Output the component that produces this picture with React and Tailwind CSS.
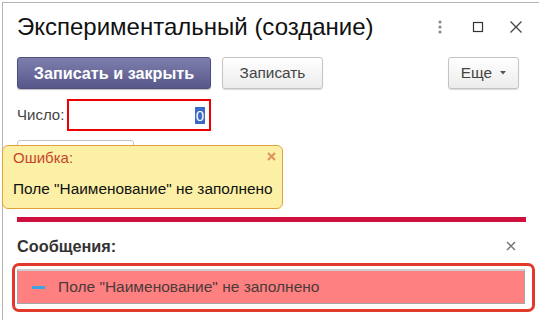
import React from "react";

export default function App() {
  return (
    <div className="relative w-[539px] h-[320px] overflow-hidden bg-white font-['Liberation_Sans',Arial,sans-serif] text-[#333]">
      <div className="ml-[2px] mt-[2px] h-[318px] border-t border-l border-[#b4b4b4] pl-[14px]">
        {/* Header */}
        <div className="flex items-center h-[28px] mt-[10px]">
          <div className="text-[24px] leading-[28px] text-[#111] whitespace-nowrap">
            Экспериментальный (создание)
          </div>
          <div className="ml-auto flex items-center">
            <svg width="6" height="14" viewBox="0 0 6 14" className="mr-[29px]">
              <circle cx="3" cy="2" r="1.6" fill="#8a8a8a" />
              <circle cx="3" cy="7" r="1.6" fill="#8a8a8a" />
              <circle cx="3" cy="12" r="1.6" fill="#8a8a8a" />
            </svg>
            <svg width="12" height="12" viewBox="0 0 12 12" className="mr-[25px]">
              <rect x="1.5" y="1.5" width="9" height="9" fill="none" stroke="#333" strokeWidth="1.2" />
            </svg>
            <svg width="14" height="14" viewBox="0 0 14 14" className="mr-[16px]">
              <path d="M1.5 1.5 L12.5 12.5 M12.5 1.5 L1.5 12.5" stroke="#444" strokeWidth="1.3" />
            </svg>
          </div>
        </div>

        {/* Buttons */}
        <div className="flex items-center mt-[16px] h-[32px]">
          <button className="h-[32px] w-[194px] rounded-[3px] border border-[#4f4f80] bg-gradient-to-b from-[#7f7fae] to-[#57578a] text-white font-bold text-[16.2px] shadow-[0_1px_1px_rgba(0,0,0,0.25)]">
            Записать и закрыть
          </button>
          <button className="ml-[11px] h-[32px] w-[101px] rounded-[3px] border border-[#c4c4c4] bg-gradient-to-b from-white to-[#ececec] text-[#444] text-[15.4px] shadow-[0_1px_1px_rgba(0,0,0,0.15)]">
            Записать
          </button>
          <button className="ml-auto mr-[20px] h-[32px] w-[71px] rounded-[3px] border border-[#c4c4c4] bg-gradient-to-b from-white to-[#ececec] text-[#444] text-[15.4px] flex items-center justify-center shadow-[0_1px_1px_rgba(0,0,0,0.15)]">
            <span>Еще</span>
            <svg width="6" height="4" viewBox="0 0 6 4" className="ml-[8px]">
              <path d="M0 0 L6 0 L3 3.5 Z" fill="#555" />
            </svg>
          </button>
        </div>

        {/* Field */}
        <div className="flex items-center mt-[10px] h-[32px]">
          <span className="text-[15px] text-[#444] w-[50px]">Число:</span>
          <div className="w-[144px] h-[32px] border-2 border-[#ee0000] flex items-center justify-end pr-[4px]">
            <span className="bg-[#3d6ac4] text-white text-[15px] leading-[17px] px-[1px]">0</span>
          </div>
        </div>

        {/* Partially hidden button */}
        <div className="mt-[9px] w-[117px] h-[28px] rounded-[3px] border border-[#c4c4c4] bg-white" />

        {/* Red line */}
        <div className="mt-[49px] w-[509px] h-[5px] bg-[#cf0f3d]" />

        {/* Messages header */}
        <div className="flex items-center mt-[15px] h-[18px] w-[509px]">
          <span className="font-bold text-[16.3px] text-[#333]">Сообщения:</span>
          <svg width="10" height="10" viewBox="0 0 10 10" className="ml-auto mr-[10px]">
            <path d="M1 1 L9 9 M9 1 L1 9" stroke="#777" strokeWidth="1.5" />
          </svg>
        </div>

        {/* Messages box */}
        <div className="mt-[8px] ml-[-5px] w-[523px] h-[49px] rounded-[7px] border-[3px] border-[#e2392d] pl-[2px] pt-[3px]">
          <div className="w-[508px] h-[35px] border border-[#a8a8a8] border-t-[2px] border-t-[#cfcfcf] bg-[#ff8080] flex items-center">
            <div className="ml-[14px] w-[13px] h-[3px] bg-[#3ba6e0]" />
            <span className="ml-[13px] text-[15.5px] text-[#4a3a3a] whitespace-nowrap">
              Поле "Наименование" не заполнено
            </span>
          </div>
        </div>
      </div>

      {/* Error tooltip */}
      <div className="absolute left-[2px] top-[145px] w-[281px] h-[64px] rounded-[6px] border border-[#e2a23a] bg-[#fcf0a6] px-[10px] pt-[3px]">
        <div className="flex items-center h-[18px]">
          <span className="text-[15px] text-[#c5462b]">Ошибка:</span>
          <svg width="9" height="9" viewBox="0 0 9 9" className="ml-auto mr-[-4px] mt-[-4px]">
            <path d="M1 1 L8 8 M8 1 L1 8" stroke="#e0925a" strokeWidth="2" />
          </svg>
        </div>
        <div className="mt-[13px] text-[15.4px] leading-[18px] text-[#111] whitespace-nowrap">
          Поле "Наименование" не заполнено
        </div>
      </div>
    </div>
  );
}
